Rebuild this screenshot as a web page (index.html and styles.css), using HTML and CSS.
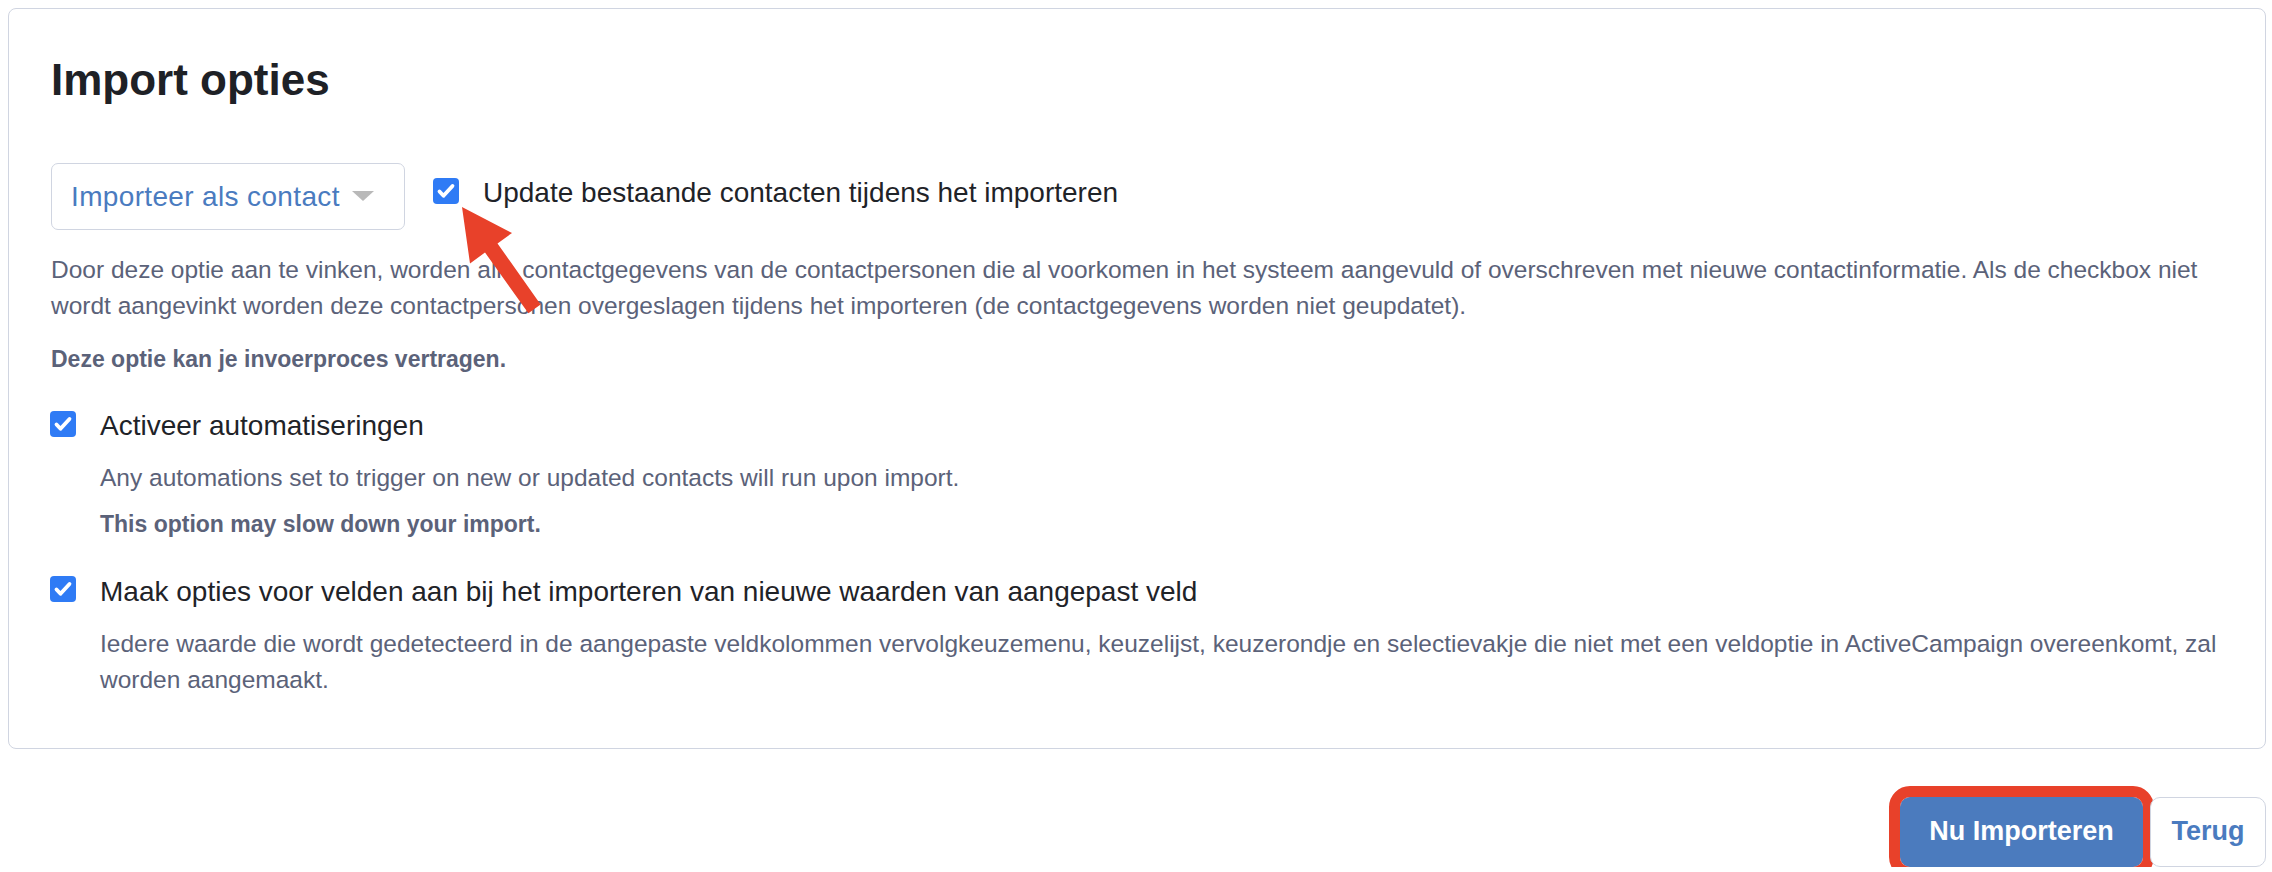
FILE: index.html
```html
<!DOCTYPE html>
<html lang="nl">
<head>
<meta charset="utf-8">
<title>Import opties</title>
<link rel="stylesheet" href="styles.css">
</head>
<body>
<main class="page">
  <section class="card">
    <h1 class="title">Import opties</h1>

    <div class="mode-row">
      <div class="select">
        <span class="select-value">Importeer als contact</span>
        <svg class="caret" width="22" height="10" viewBox="0 0 22 10"><polygon points="0,0 22,0 11,10" fill="#b9b9b9"/></svg>
      </div>
      <label class="check check-update">
        <svg class="box" width="26" height="26" viewBox="0 0 26 26"><rect width="26" height="26" rx="4" fill="#2f7bf5"/><polyline points="6.5,13.5 10.5,17.8 19.5,8" fill="none" stroke="#fff" stroke-width="3.8" stroke-linecap="round" stroke-linejoin="round"/></svg>
        <span class="label">Update bestaande contacten tijdens het importeren</span>
      </label>
    </div>

    <p class="desc desc-update">Door deze optie aan te vinken, worden alle contactgegevens van de contactpersonen die al voorkomen in het systeem aangevuld of overschreven met nieuwe contactinformatie. Als de checkbox niet wordt aangevinkt worden deze contactpersonen overgeslagen tijdens het importeren (de contactgegevens worden niet geupdatet).</p>
    <p class="desc-strong desc-strong-top">Deze optie kan je invoerproces vertragen.</p>

    <div class="option option-first">
      <label class="check">
        <svg class="box" width="26" height="26" viewBox="0 0 26 26"><rect width="26" height="26" rx="4" fill="#2f7bf5"/><polyline points="6.5,13.5 10.5,17.8 19.5,8" fill="none" stroke="#fff" stroke-width="3.8" stroke-linecap="round" stroke-linejoin="round"/></svg>
        <span class="label">Activeer automatiseringen</span>
      </label>
      <div class="option-body">
        <p class="desc">Any automations set to trigger on new or updated contacts will run upon import.</p>
        <p class="desc-strong desc-strong-inner">This option may slow down your import.</p>
      </div>
    </div>

    <div class="option option-second">
      <label class="check">
        <svg class="box" width="26" height="26" viewBox="0 0 26 26"><rect width="26" height="26" rx="4" fill="#2f7bf5"/><polyline points="6.5,13.5 10.5,17.8 19.5,8" fill="none" stroke="#fff" stroke-width="3.8" stroke-linecap="round" stroke-linejoin="round"/></svg>
        <span class="label">Maak opties voor velden aan bij het importeren van nieuwe waarden van aangepast veld</span>
      </label>
      <div class="option-body">
        <p class="desc">Iedere waarde die wordt gedetecteerd in de aangepaste veldkolommen vervolgkeuzemenu, keuzelijst, keuzerondje en selectievakje die niet met een veldoptie in ActiveCampaign overeenkomt, zal worden aangemaakt.</p>
      </div>
    </div>
  </section>

  <div class="actions">
    <button class="btn btn-primary" type="button">Nu Importeren</button>
    <button class="btn btn-secondary" type="button">Terug</button>
  </div>
</main>

<svg class="annot-arrow" width="100" height="130" viewBox="0 0 100 130">
  <polygon points="12,7 62,33 47.5,43.4 90.6,104.55 78.4,113.25 35,52.5 20,63.5" fill="#e8412a"/>
</svg>
</body>
</html>
```

FILE: styles.css
```css
html, body {
  margin: 0;
  padding: 0;
  background: #ffffff;
}

body {
  padding: 8px 6px 0 8px;
  font-family: "Liberation Sans", Arial, sans-serif;
  color: #1f2328;
}

.page {
  display: flex;
  flex-direction: column;
}

.card {
  border: 1px solid #d0d5e1;
  border-radius: 8px;
  padding: 44px 42px 50px 42px;
}

.title {
  margin: 0;
  font-size: 44px;
  line-height: 53px;
  font-weight: 700;
  color: #1e2126;
}

.mode-row {
  margin-top: 57px;
  display: flex;
  align-items: flex-start;
}

.select {
  box-sizing: border-box;
  width: 354px;
  height: 67px;
  border: 1px solid #d0d5e1;
  border-radius: 7px;
  padding: 0 19px;
  display: flex;
  align-items: center;
  gap: 12px;
}

.select-value {
  font-size: 28px;
  letter-spacing: 0.35px;
  color: #4a7bbf;
  white-space: nowrap;
}

.caret {
  display: block;
  margin-top: -1px;
}

.check {
  display: flex;
  align-items: flex-start;
  gap: 24px;
  font-size: 28px;
  line-height: 36px;
  color: #1f2328;
}

.check .box {
  display: block;
  flex: none;
  margin-top: 2.5px;
}

.check-update {
  margin-left: 28px;
  margin-top: 12px;
}

.desc {
  margin: 0;
  font-size: 24.5px;
  line-height: 36px;
  color: #5b6279;
}

.desc-update {
  margin-top: 22px;
}

.desc-strong {
  margin: 0;
  font-size: 23px;
  line-height: 36px;
  font-weight: 700;
  color: #5b6279;
}

.desc-strong-top {
  margin-top: 17px;
}

.option-first {
  margin-top: 31px;
}

.option-second {
  margin-top: 32px;
}

.option .check {
  margin-left: -1px;
}

.option-body {
  margin-left: 49px;
  margin-top: 16px;
}

.desc-strong-inner {
  margin-top: 9.5px;
}

.actions {
  margin-top: 48px;
  display: flex;
  justify-content: flex-end;
  gap: 7px;
}

.btn {
  box-sizing: border-box;
  height: 70px;
  font-family: "Liberation Sans", Arial, sans-serif;
  font-size: 27px;
  font-weight: 700;
  border-radius: 10px;
  cursor: pointer;
}

.btn-primary {
  width: 243px;
  background: #4b7bbe;
  color: #ffffff;
  border: 1px solid #4b7bbe;
  outline: 11px solid #e8412a;
  outline-offset: 0;
}

.btn-secondary {
  width: 116px;
  background: #ffffff;
  color: #4a7bbf;
  border: 1.5px solid #d0d5e1;
}

.annot-arrow {
  position: absolute;
  left: 450px;
  top: 200px;
  pointer-events: none;
}
```
